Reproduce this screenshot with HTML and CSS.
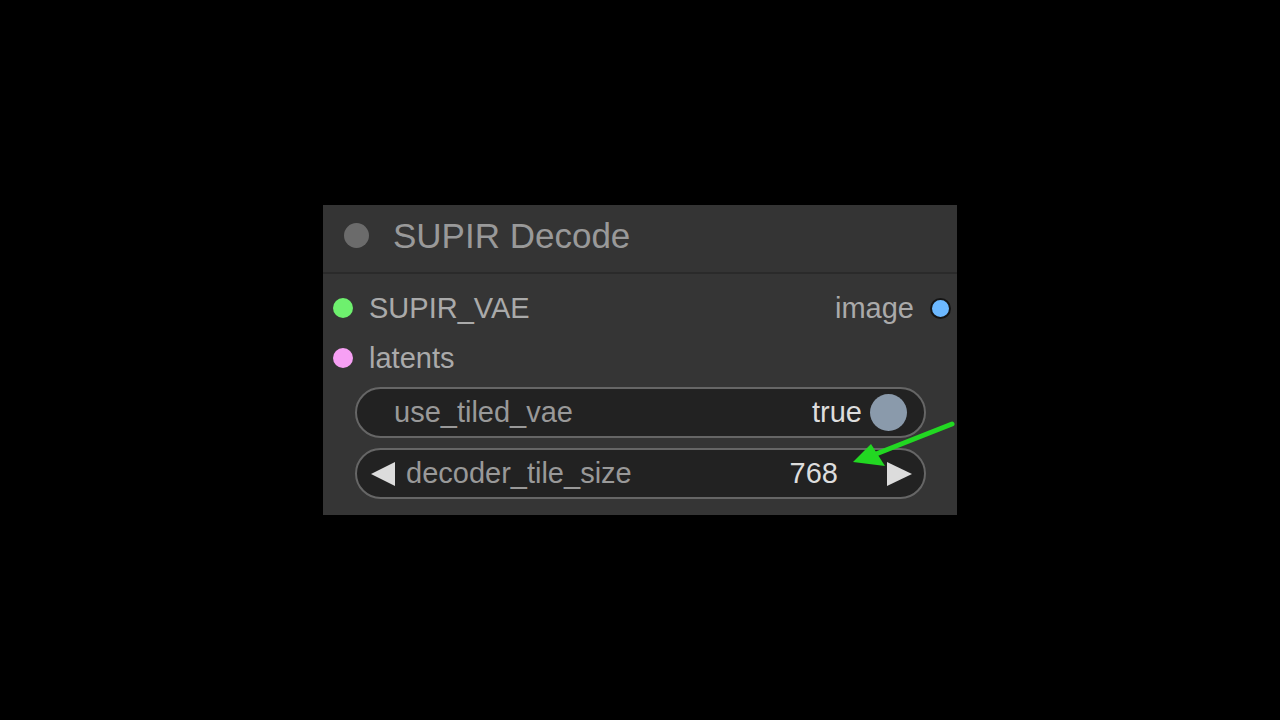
FILE: index.html
```html
<!DOCTYPE html>
<html>
<head>
<meta charset="utf-8">
<link rel="stylesheet" href="styles.css">
</head>
<body>
<div class="stage">
  <div class="node">
    <div class="title">
      <span class="title-dot"></span>
      <span class="title-text">SUPIR Decode</span>
    </div>
    <div class="body">
      <div class="slot-row">
        <div class="slot in"><span class="dot green"></span><span class="slot-label">SUPIR_VAE</span></div>
        <div class="slot out"><span class="slot-label">image</span><span class="dot blue"></span></div>
      </div>
      <div class="slot-row">
        <div class="slot in"><span class="dot pink"></span><span class="slot-label">latents</span></div>
      </div>
      <div class="widgets">
        <div class="widget toggle">
          <span class="w-label">use_tiled_vae</span>
          <span class="w-value">true</span>
          <span class="knob"></span>
        </div>
        <div class="widget number">
          <svg class="arr" width="26" height="26" viewBox="0 0 26 26"><polygon points="25,1 25,25 1,13" fill="#dcdcdc"/></svg>
          <span class="w-label">decoder_tile_size</span>
          <span class="w-value">768</span>
          <svg class="arr right" width="26" height="26" viewBox="0 0 26 26"><polygon points="1,1 1,25 26,13" fill="#dcdcdc"/></svg>
        </div>
      </div>
    </div>
    <svg class="annot" width="120" height="60" viewBox="0 0 120 60">
      <line x1="116" y1="5" x2="40" y2="35" stroke="#22d822" stroke-width="5" stroke-linecap="round"/>
      <polygon points="17,43 35,25 49,47" fill="#22d822"/>
    </svg>
  </div>
</div>
</body>
</html>
```
FILE: styles.css
```css
html, body {
  margin: 0;
  padding: 0;
  background: #000;
}
body {
  width: 1280px;
  height: 720px;
  font-family: "Liberation Sans", Arial, sans-serif;
}
.stage {
  padding-top: 205px;
  padding-left: 323px;
}
.node {
  position: relative;
  width: 634px;
  height: 310px;
  background: #353535;
  display: flex;
  flex-direction: column;
}
.title {
  box-sizing: border-box;
  height: 69px;
  display: flex;
  align-items: center;
  padding-left: 21px;
  padding-bottom: 6px;
  border-bottom: 2px solid #2a2a2a;
  background: #343434;
}
.title-dot {
  width: 25px;
  height: 25px;
  border-radius: 50%;
  background: #6b6b6b;
}
.title-text {
  margin-left: 24px;
  font-size: 35px;
  color: #999;
  line-height: 1;
}
.body {
  padding: 9px 6px 0 10px;
  display: flex;
  flex-direction: column;
}
.slot-row {
  height: 50px;
  display: flex;
  align-items: center;
  justify-content: space-between;
}
.slot {
  display: flex;
  align-items: center;
  gap: 16px;
}
.dot {
  width: 20px;
  height: 20px;
  border-radius: 50%;
  box-sizing: border-box;
}
.green { background: #6ef06e; }
.pink { background: #f7a0f4; }
.blue { background: #6cb8ff; border: 2px solid #151515; width: 21px; height: 21px; }
.slot-label {
  font-size: 29px;
  color: #aaa;
  line-height: 1;
}
.widgets {
  margin-top: 4px;
  padding-left: 22px;
  padding-right: 25px;
  display: flex;
  flex-direction: column;
  gap: 10px;
}
.widget {
  box-sizing: border-box;
  height: 51px;
  border: 2px solid #666;
  border-radius: 26px;
  background: #222;
  display: flex;
  align-items: center;
}
.w-label {
  font-size: 29px;
  color: #999;
  line-height: 1;
  flex: 1;
}
.w-value {
  font-size: 29px;
  color: #ddd;
  line-height: 1;
}
.toggle {
  padding-left: 37px;
  padding-right: 17px;
}
.knob {
  margin-left: 8px;
  width: 37px;
  height: 37px;
  border-radius: 50%;
  background: #8a9aab;
}
.number {
  padding-left: 13px;
  padding-right: 12px;
}
.number .w-label {
  margin-left: 10px;
}
.arr.right {
  margin-left: 48px;
}
.annot {
  position: absolute;
  left: 513px;
  top: 214px;
}
```
